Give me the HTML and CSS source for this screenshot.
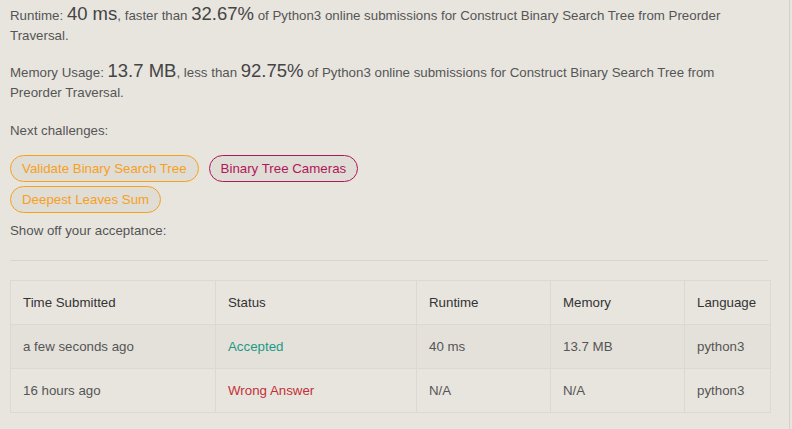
FILE: index.html
```html
<!DOCTYPE html>
<html>
<head>
<meta charset="utf-8">
<link rel="stylesheet" href="styles.css">
</head>
<body>
<div class="panel">
  <div class="content">
    <p class="stat first">Runtime: <span class="big">40 ms</span>, faster than <span class="big">32.67%</span> of Python3 online submissions for Construct Binary Search Tree from Preorder Traversal.</p>
    <p class="stat second">Memory Usage: <span class="big">13.7 MB</span>, less than <span class="big">92.75%</span> of Python3 online submissions for Construct Binary Search Tree from Preorder Traversal.</p>
    <p class="label next">Next challenges:</p>
    <div class="pills">
      <div class="pill-row">
        <span class="pill pill-medium">Validate Binary Search Tree</span>
        <span class="pill pill-hard">Binary Tree Cameras</span>
      </div>
      <div class="pill-row">
        <span class="pill pill-medium">Deepest Leaves Sum</span>
      </div>
    </div>
    <p class="label show">Show off your acceptance:</p>
    <hr class="divider">
    <table class="subs">
      <thead>
        <tr>
          <th class="c1">Time Submitted</th>
          <th class="c2">Status</th>
          <th class="c3">Runtime</th>
          <th class="c4">Memory</th>
          <th class="c5">Language</th>
        </tr>
      </thead>
      <tbody>
        <tr class="hl">
          <td>a few seconds ago</td>
          <td class="ok">Accepted</td>
          <td>40 ms</td>
          <td>13.7 MB</td>
          <td>python3</td>
        </tr>
        <tr>
          <td>16 hours ago</td>
          <td class="bad">Wrong Answer</td>
          <td>N/A</td>
          <td>N/A</td>
          <td>python3</td>
        </tr>
      </tbody>
    </table>
  </div>
</div>
</body>
</html>
```
FILE: styles.css
```css
html, body {
  margin: 0;
  padding: 0;
  background: #e8e5df;
}
body {
  font-family: "Liberation Sans", Arial, sans-serif;
  font-size: 13.3px;
  color: #555;
}
.panel {
  width: 790px;
  height: 429px;
  border-right: 1px solid #d4d0ca;
  box-sizing: border-box;
  overflow: hidden;
}
.content {
  padding: 0 21px 0 10px;
}
.stat {
  margin: 0;
  line-height: 20px;
}
.first {
  padding-top: 6px;
}
.second {
  margin-top: 17px;
}
.big {
  font-size: 18.5px;
  color: #444;
  line-height: 0;
}
.label {
  margin: 0;
  line-height: 20px;
}
.next {
  margin-top: 18px;
}
.pills {
  display: flex;
  flex-direction: column;
  gap: 4px;
  margin-top: 14px;
}
.pill-row {
  display: flex;
  gap: 10px;
}
.pill {
  display: inline-block;
  height: 27px;
  line-height: 25px;
  box-sizing: border-box;
  padding: 0 11px;
  border-radius: 14px;
  border: 1px solid;
  background: #e0dcd6;
}
.pill-medium {
  color: #f5a11d;
  border-color: #f5a11d;
}
.pill-hard {
  color: #b0175a;
  border-color: #b0175a;
}
.show {
  margin-top: 8px;
}
.divider {
  border: 0;
  border-top: 1px solid #d9d5cf;
  margin: 19px 0 19px 0;
  height: 0;
}
.subs {
  border-collapse: collapse;
  width: 760px;
  table-layout: fixed;
}
.subs th, .subs td {
  border: 1px solid #dcd8d2;
  height: 44px;
  padding: 0 12px;
  text-align: left;
  font-weight: normal;
  box-sizing: border-box;
}
.subs th {
  color: #333;
}
.c1 { width: 205px; }
.c2 { width: 201px; }
.c3 { width: 134px; }
.c4 { width: 134px; }
.c5 { width: 86px; }
.hl td {
  background: #e4e1db;
}
.ok { color: #1d9985; }
.bad { color: #c33037; }
```
